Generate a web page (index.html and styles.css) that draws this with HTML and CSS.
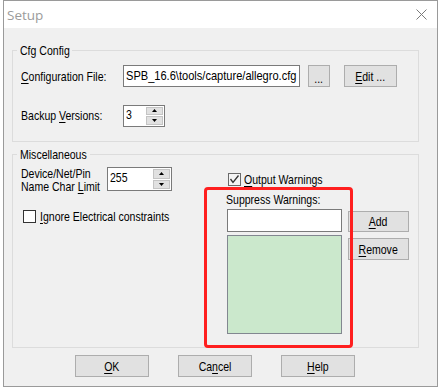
FILE: index.html
```html
<!DOCTYPE html>
<html lang="en">
<head>
    <meta charset="UTF-8">
    <meta name="viewport" content="width=device-width, initial-scale=1.0">
    <title>Setup</title>
    <link rel="stylesheet" href="styles.css">
</head>
<body>
    <div class="window">
        <div class="titlebar">
            <span class="title">Setup</span>
            <svg class="close" width="11" height="11" viewBox="0 0 11 11">
                <path d="M0.5 0.5 L10.5 10.5 M10.5 0.5 L0.5 10.5" stroke="#7a7a7a" stroke-width="1" fill="none"/>
            </svg>
        </div>
        <div class="client">
            <fieldset class="group cfg">
                <legend class="legend-cfg"><span class="t">Cfg Config</span></legend>
                <div class="row row-file">
                    <span class="lbl"><span class="t"><u>C</u>onfiguration File:</span></span>
                    <div class="edit file-edit"><span class="t">SPB_16.6\tools/capture/allegro.cfg</span></div>
                    <button class="btn btn-browse"><span class="t">...</span></button>
                    <button class="btn btn-edit"><span class="t"><u>E</u>dit ...</span></button>
                </div>
                <div class="row row-backup">
                    <span class="lbl"><span class="t">Backup <u>V</u>ersions:</span></span>
                    <div class="spin spin-small">
                        <span class="spin-val"><span class="t">3</span></span>
                        <span class="spin-btns">
                            <span class="spin-btn"><svg width="5" height="3" viewBox="0 0 5 3"><path d="M2.5 0 L5 3 L0 3 Z" fill="#000"/></svg></span>
                            <span class="spin-btn"><svg width="5" height="3" viewBox="0 0 5 3"><path d="M0 0 L5 0 L2.5 3 Z" fill="#000"/></svg></span>
                        </span>
                    </div>
                </div>
            </fieldset>

            <fieldset class="group misc">
                <legend class="legend-misc"><span class="t">Miscellaneous</span></legend>
                <div class="misc-cols">
                    <div class="misc-left">
                        <div class="limit-row">
                            <span class="limit-lbl"><span class="t">Device/Net/Pin<br>Name Char <u>L</u>imit</span></span>
                            <div class="spin spin-wide">
                                <span class="spin-val"><span class="t">255</span></span>
                                <span class="spin-btns">
                                    <span class="spin-btn"><svg width="5" height="3" viewBox="0 0 5 3"><path d="M2.5 0 L5 3 L0 3 Z" fill="#000"/></svg></span>
                                    <span class="spin-btn"><svg width="5" height="3" viewBox="0 0 5 3"><path d="M0 0 L5 0 L2.5 3 Z" fill="#000"/></svg></span>
                                </span>
                            </div>
                        </div>
                        <div class="check check-ignore">
                            <span class="box"></span>
                            <span class="t"><u>I</u>gnore Electrical constraints</span>
                        </div>
                    </div>
                    <div class="misc-right">
                        <div class="check check-output">
                            <span class="box box-checked">
                                <svg width="11" height="11" viewBox="0 0 11 11"><path d="M1.5 5 L4 8.5 L9.5 1.5" stroke="#333" stroke-width="1.3" fill="none"/></svg>
                            </span>
                            <span class="t"><u>O</u>utput Warnings</span>
                        </div>
                        <div class="suppress-lbl"><span class="t">Suppress Warnings:</span></div>
                        <div class="suppress-grid">
                            <div class="edit warn-edit"></div>
                            <button class="btn btn-side btn-add"><span class="t"><u>A</u>dd</span></button>
                            <div class="warn-list"></div>
                            <button class="btn btn-side btn-remove"><span class="t"><u>R</u>emove</span></button>
                        </div>
                    </div>
                    <div class="highlight"></div>
                </div>
            </fieldset>

            <div class="footer">
                <button class="btn btn-foot"><span class="t"><u>O</u>K</span></button>
                <button class="btn btn-foot"><span class="t">Ca<u>n</u>cel</span></button>
                <button class="btn btn-foot"><span class="t"><u>H</u>elp</span></button>
            </div>
        </div>
    </div>
</body>
</html>
```

FILE: styles.css
```css
body {
    margin: 0;
    background-color: #ffffff;
    font-family: 'Liberation Sans', Arial, sans-serif;
    font-size: 13.5px;
    color: #000;
}
u {
    text-decoration-thickness: 1px;
    text-underline-offset: 2px;
}
/* the dialog font is a narrow one, squeeze Arial to match */
.t {
    display: inline-block;
    white-space: nowrap;
    transform: scaleX(0.78);
    transform-origin: 0 50%;
}
.window {
    box-sizing: border-box;
    width: 435px;
    height: 387px;
    margin-left: 3px;
    border: 1px solid #9a9a9a;
    background: #f0f0f0;
}
.titlebar {
    height: 27px;
    background: #ffffff;
    display: flex;
    align-items: center;
    justify-content: space-between;
    padding: 0 10px 0 3px;
}
.title {
    font-family: 'Open Sans', 'Noto Sans', sans-serif;
    font-size: 13.5px;
    color: #9b9b9b;
}
.client {
    height: 358px;
}

/* group boxes */
.group {
    margin: 0 18px 0 8px;
    padding: 0;
    border: 1px solid #dcdcdc;
    min-width: 0;
}
.group legend {
    margin-left: 4px;
    padding: 0 3px;
    line-height: 15px;
    white-space: nowrap;
}
.legend-cfg {
    width: 49px;
}
.legend-misc {
    width: 67px;
}
.cfg {
    margin-top: 15px;
    padding-bottom: 15px;
}
.misc {
    margin-top: 5px;
    padding-bottom: 13px;
}

.row {
    display: flex;
    align-items: center;
    padding-left: 8px;
}
.row-file {
    margin-top: 7px;
    height: 22px;
}
.row-backup {
    margin-top: 18px;
    height: 21px;
}
.lbl {
    width: 102px;
    white-space: nowrap;
}

/* edit boxes and buttons */
.edit {
    box-sizing: border-box;
    background: #ffffff;
    border: 1px solid #7a7a7a;
}
.file-edit {
    width: 177px;
    height: 22px;
    padding-left: 2px;
    line-height: 20px;
    white-space: nowrap;
    overflow: hidden;
}
.file-edit .t {
    transform: scaleX(0.82);
}
.btn {
    box-sizing: border-box;
    display: flex;
    align-items: center;
    justify-content: center;
    background: #e1e1e1;
    border: 1px solid #adadad;
    padding: 0;
    font-family: inherit;
    font-size: 13.5px;
    color: #000;
}
.btn .t {
    transform-origin: 50% 50%;
}
.btn-browse {
    width: 22px;
    height: 22px;
    margin-left: 8px;
    padding-top: 4px;
}
.btn-edit {
    width: 53px;
    height: 22px;
    margin-left: 14px;
}

/* spin boxes */
.spin {
    box-sizing: border-box;
    display: flex;
    background: #ffffff;
    border: 1px solid #7a7a7a;
}
.spin-val {
    flex: 1;
    padding-left: 2px;
    line-height: 17px;
}
.spin-btns {
    display: flex;
    flex-direction: column;
    gap: 1px;
    padding: 1px;
    background: #ffffff;
}
.spin-btn {
    flex: 1;
    box-sizing: border-box;
    width: 17px;
    display: flex;
    align-items: center;
    justify-content: center;
    background: #e1e1e1;
    border: 1px solid #c4c4c4;
}
.spin-small {
    width: 42px;
    height: 22px;
}
.spin-wide {
    width: 65px;
    height: 24px;
}
.spin-wide .spin-val {
    line-height: 19px;
}

/* miscellaneous */
.misc-cols {
    position: relative;
    display: flex;
}
.misc-left {
    width: 206px;
    padding-left: 8px;
}
.limit-row {
    display: flex;
    align-items: center;
    margin-top: 5px;
    height: 24px;
}
.limit-lbl {
    width: 86px;
    line-height: 13px;
    padding-top: 1px;
}
.check {
    display: flex;
    align-items: center;
    line-height: 15px;
}
.box {
    box-sizing: border-box;
    width: 13px;
    height: 13px;
    margin-right: 4px;
    background: #ffffff;
    border: 1px solid #333333;
    display: flex;
    align-items: center;
    justify-content: center;
}
.box-checked {
    background: #f4f4f4;
    border-color: #6a6a6a;
    margin-right: 3px;
}
.check-ignore {
    margin-top: 18px;
    margin-left: 2px;
}
.check-output {
    margin-top: 10px;
    margin-left: 1px;
}
.suppress-lbl {
    margin-top: 6px;
    line-height: 14px;
    margin-left: -1px;
}
.suppress-grid {
    margin-top: 2px;
    display: grid;
    grid-template-columns: 115px 61px;
    column-gap: 6px;
    row-gap: 3px;
}
.warn-edit {
    height: 23px;
}
.btn-side {
    height: 21px;
}
.btn-add {
    align-self: end;
}
.btn-remove {
    align-self: start;
    margin-top: 3px;
    height: 22px;
}
.warn-list {
    box-sizing: border-box;
    height: 99px;
    background: #cbe8cc;
    border: 1px solid #828790;
}
.highlight {
    position: absolute;
    left: 191px;
    top: 25px;
    width: 149px;
    height: 161px;
    box-sizing: border-box;
    border: 3px solid #ff1f1f;
    border-radius: 4px;
}

/* dialog buttons */
.footer {
    display: flex;
    gap: 29px;
    margin-top: 7px;
    padding-left: 71px;
}
.btn-foot {
    width: 74px;
    height: 22px;
}
```
